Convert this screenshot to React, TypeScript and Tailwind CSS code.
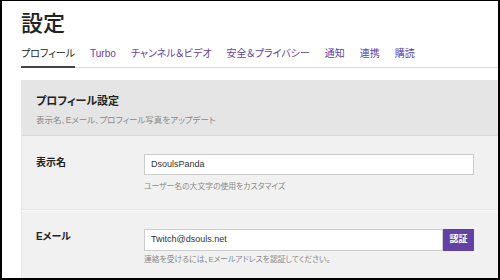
import React from "react";

const tabs = ["プロフィール", "Turbo", "チャンネル＆ビデオ", "安全＆プライバシー", "通知", "連携", "購読"];

export default function App() {
  return (
    <div
      className="w-[500px] h-[280px] overflow-hidden bg-white border-l-2 border-t border-r-2 border-b-2 border-black [font-feature-settings:'palt']"
      style={{ fontFamily: '"Liberation Sans", "Noto Sans CJK JP", sans-serif' }}
    >
      <div className="pl-[19px]">
        {/* Title */}
        <h1 className="pt-[12px] text-[22px] leading-none text-[#222] font-medium">設定</h1>

        {/* Tabs */}
        <div className="mt-[13px] flex border-b border-[#dcdcdc]">
          {tabs.map((t, i) => (
            <div
              key={t}
              className={`text-[10px] leading-[11px] pb-[7px] mr-[15px] -mb-px ${
                i === 0 ? "text-[#222] border-b-2 border-[#444]" : "text-[#6441a5] border-b-2 border-transparent"
              }`}
            >
              {t}
            </div>
          ))}
        </div>

        {/* Panel */}
        <div className="mt-[12px] border-l border-[#e8e8e8]">
          <div className="bg-[#e5e5e5] h-[56px] pl-[14px] pt-[15px] border-b border-[#dadada]">
            <div className="text-[11px] leading-[12px] font-bold text-[#222]">プロフィール設定</div>
            <div className="mt-[8px] text-[8.5px] leading-[10px] text-[#888]">
              表示名、Eメール、プロフィール写真をアップデート
            </div>
          </div>

          <div className="bg-[#f1f1f1]">
            {/* Display name */}
            <div className="flex pl-[14px] pt-[18px] h-[74px] border-b border-[#e4e4e4]">
              <div className="w-[108px] pt-[3px] text-[10px] leading-[11px] font-bold text-[#222]">表示名</div>
              <div className="w-[330px]">
                <div className="h-[21px] bg-white border border-[#cccccc] pl-[6px] flex items-center text-[9px] text-[#333]">
                  DsoulsPanda
                </div>
                <div className="mt-[7px] text-[7.8px] leading-[9px] text-[#888]">ユーザー名の大文字の使用をカスタマイズ</div>
              </div>
            </div>

            {/* Email */}
            <div className="flex pl-[14px] pt-[18px] h-[80px] border-t border-[#fafafa]">
              <div className="w-[108px] pt-[2px] text-[10px] leading-[11px] font-bold text-[#222]">Eメール</div>
              <div className="w-[330px]">
                <div className="flex h-[22px]">
                  <div className="flex-1 bg-white border border-[#cccccc] pl-[6px] flex items-center text-[9px] text-[#333]">
                    Twitch@dsouls.net
                  </div>
                  <button className="w-[31px] bg-[#6441a5] text-white text-[9px] font-bold">認証</button>
                </div>
                <div className="mt-[4px] text-[7.8px] leading-[9px] text-[#888]">
                  連絡を受けるには、Eメールアドレスを認証してください。
                </div>
              </div>
            </div>
          </div>
        </div>
      </div>
    </div>
  );
}
